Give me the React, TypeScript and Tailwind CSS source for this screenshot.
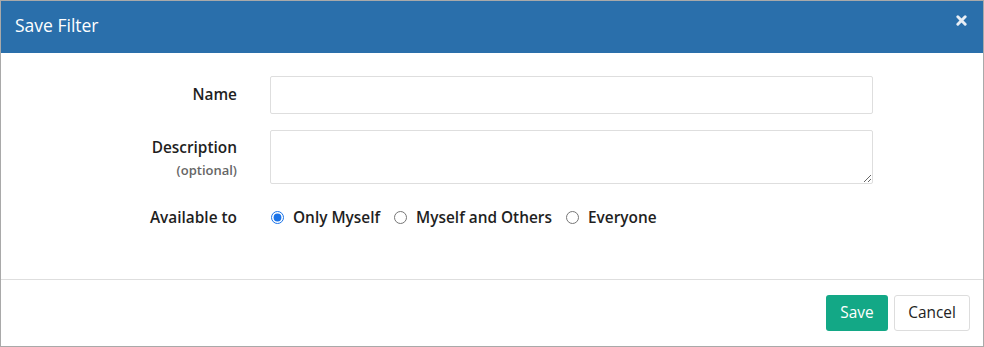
import { useState } from 'react'

const OPTIONS = ['Only Myself', 'Myself and Others', 'Everyone']

export default function App() {
  const [avail, setAvail] = useState('Only Myself')

  return (
    <div className="w-[984px] h-[347px] border border-[#a9a9a9] bg-white flex flex-col font-['Open_Sans',sans-serif] text-[#1f1f1f]">
      <div className="h-[52px] bg-[#2a6fab] flex items-start justify-between pl-[14px] pr-[16px] shrink-0">
        <h2 className="text-[17.5px] text-white font-medium mt-[11px]">Save Filter</h2>
        <button type="button" className="text-[#e8eef5] mt-[14px]">
          <svg width="11" height="11" viewBox="0 0 12 12">
            <path d="M2 2 L10 10 M10 2 L2 10" stroke="currentColor" strokeWidth="3.2" strokeLinecap="round" />
          </svg>
        </button>
      </div>

      <div className="flex-1 pt-[23px] pr-[110px] flex flex-col">
        <div className="flex items-center">
          <label className="w-[236px] text-right text-[15.4px] font-semibold">Name</label>
          <input type="text" className="ml-[33px] flex-1 h-[38px] border border-[#dedede] rounded-[2px] px-3 text-[15px] outline-none" />
        </div>

        <div className="flex items-start mt-[16px]">
          <div className="w-[236px] text-right pt-[8px] leading-tight">
            <div className="text-[15.4px] font-semibold">Description</div>
            <div className="text-[13px] font-semibold text-[#666] mt-[5px]">(optional)</div>
          </div>
          <textarea className="ml-[33px] flex-1 h-[54px] border border-[#dedede] rounded-[2px] px-3 py-2 text-[15px] outline-none block" />
        </div>

        <div className="flex items-center mt-[22px]">
          <label className="w-[236px] text-right text-[15.4px] font-semibold">Available to</label>
          <div className="ml-[34px] flex items-center gap-[14px]">
            {OPTIONS.map((o) => (
              <label key={o} className="flex items-center gap-[9px] cursor-pointer text-[15.4px] font-semibold">
                <input
                  type="radio"
                  name="avail"
                  checked={avail === o}
                  onChange={() => setAvail(o)}
                  className="w-[13px] h-[13px] m-0 accent-[#1a73e8]"
                />
                {o}
              </label>
            ))}
          </div>
        </div>
      </div>

      <div className="h-[67px] border-t border-[#dedede] flex items-center justify-end gap-[6px] pr-[13px] shrink-0">
        <button type="button" className="h-[36px] w-[62px] bg-[#13a886] text-white text-[15.4px] rounded-[3px]">
          Save
        </button>
        <button type="button" className="h-[36px] w-[76px] bg-white border border-[#dddddd] text-[#222] text-[15.4px] rounded-[3px]">
          Cancel
        </button>
      </div>
    </div>
  )
}
